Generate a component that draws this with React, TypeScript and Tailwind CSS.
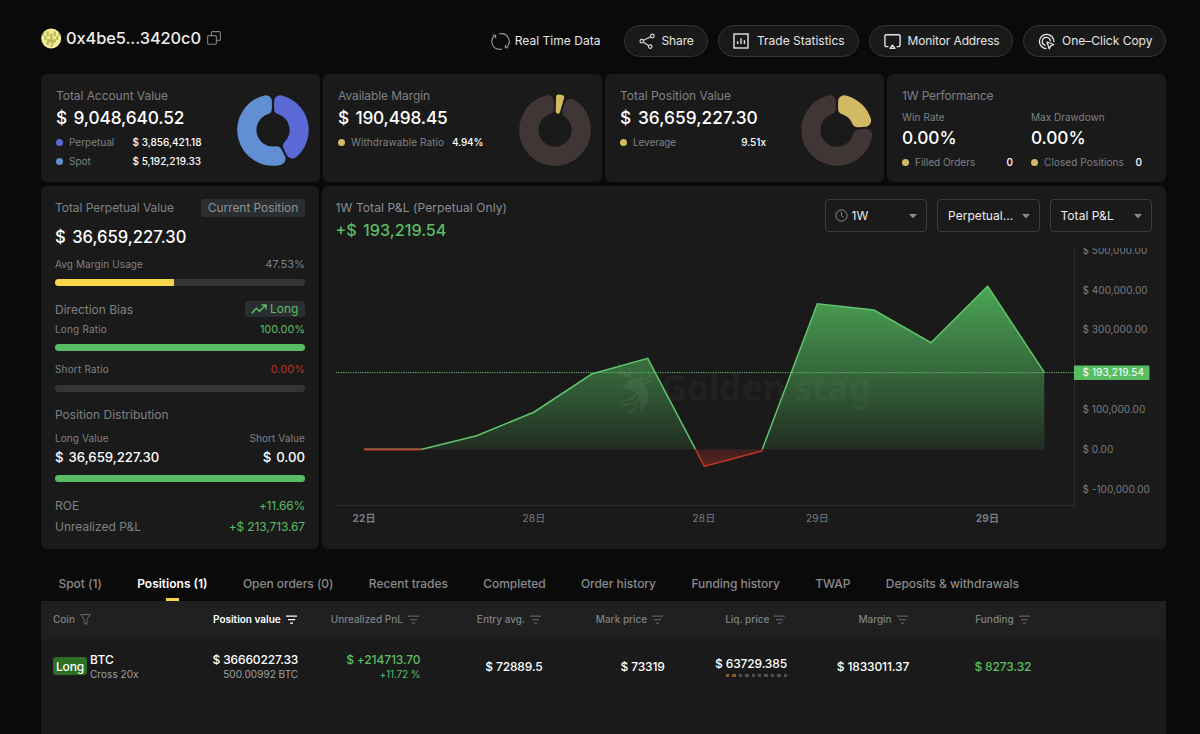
import type { ReactNode } from "react";
import clsx from "clsx";

interface SliceProps {
  cx: number;
  cy: number;
  from: number;
  to: number;
  round: number;
  color: string;
}

const OUTER = 35.7;
const INNER = 16.6;
const GAP = 1.1;

const polar = (cx: number, cy: number, r: number, a: number) =>
  `${(cx + r * Math.sin(a)).toFixed(2)} ${(cy - r * Math.cos(a)).toFixed(2)}`;

// Ring slice with rounded corners. The path is inset by the corner radius and
// grown back with a round stroke join.
const Slice = ({ cx, cy, from, to, round, color }: SliceProps) => {
  const a0 = (from * Math.PI) / 180;
  const a1 = (to * Math.PI) / 180;
  const ro = OUTER - round;
  const ri = INNER + round;
  const d = GAP + round;
  const o = Math.asin(d / ro);
  const i = Math.min(Math.asin(d / ri), (a1 - a0) / 2);
  const large = a1 - a0 - 2 * o > Math.PI ? 1 : 0;
  const largeIn = a1 - a0 - 2 * i > Math.PI ? 1 : 0;
  const path = [
    `M${polar(cx, cy, ro, a0 + o)}`,
    `A${ro} ${ro} 0 ${large} 1 ${polar(cx, cy, ro, a1 - o)}`,
    `L${polar(cx, cy, ri, a1 - i)}`,
    `A${ri} ${ri} 0 ${largeIn} 0 ${polar(cx, cy, ri, a0 + i)}Z`,
  ].join("");

  return <path d={path} fill={color} stroke={color} strokeWidth={round * 2} strokeLinejoin="round" />;
};

const Donut = ({ children }: { children: ReactNode }) => (
  <svg className="mt-[19px] mr-[10px] size-[74px] shrink-0" viewBox="0 0 74 74">
    {children}
  </svg>
);

const Dot = ({ className }: { className: string }) => (
  <span className={clsx("mr-[6px] size-[7px] shrink-0 rounded-full", className)} />
);

interface CardProps {
  title: string;
  value: string;
  titleClass?: string;
  valueClass: string;
  chart: ReactNode;
  children: ReactNode;
}

const Card = (props: CardProps) => (
  <div className="flex h-[108px] flex-1 justify-between rounded-[6px] bg-[#1a1a1a] pl-[15px]">
    <div className="pt-[14px]">
      <div className={clsx("text-xs leading-4 text-[#7e8185]", props.titleClass)}>{props.title}</div>
      <div className={clsx("mt-0.5 text-[17.3px] leading-6 font-medium text-white [word-spacing:2px]", props.valueClass)}>{props.value}</div>
      <div className="mt-1 flex flex-col gap-[3px] text-[10px] leading-4 text-[#7e8185]">{props.children}</div>
    </div>
    {props.chart}
  </div>
);

const Summary = () => (
  <div className="flex gap-[3px]">
    <Card
      title="Total Account Value"
      titleClass="tracking-[-0.06px]"
      value="$ 9,048,640.52"
      valueClass="tracking-[-0.12px]"
      chart={
        <Donut>
          <Slice cx={37} cy={37} from={0} to={153.4} round={6.2} color="#5b69d6" />
          <Slice cx={37} cy={37} from={153.4} to={360} round={6.2} color="#628fd3" />
        </Donut>
      }
    >
      <div className="flex items-center">
        <Dot className="bg-[#5b69d6]" />
        <span className="w-[63.5px]">Perpetual</span>
        <span className="font-medium text-white">$ 3,856,421.18</span>
      </div>
      <div className="flex items-center">
        <Dot className="bg-[#628fd3]" />
        <span className="w-[63.5px]">Spot</span>
        <span className="font-medium text-white">$ 5,192,219.33</span>
      </div>
    </Card>
    <Card
      title="Available Margin"
      titleClass="tracking-[-0.08px]"
      value="$ 190,498.45"
      valueClass="tracking-[-0.18px]"
      chart={
        <Donut>
          <Slice cx={37} cy={37} from={17.8} to={360} round={6.2} color="#403635" />
          <Slice cx={37} cy={37} from={0} to={17.8} round={2.2} color="#d3b964" />
        </Donut>
      }
    >
      <div className="flex items-center">
        <Dot className="bg-[#d3b964]" />
        <span className="w-[101px] tracking-[0.08px]">Withdrawable Ratio</span>
        <span className="font-medium tracking-[-0.12px] text-white">4.94%</span>
      </div>
    </Card>
    <Card
      title="Total Position Value"
      value="$ 36,659,227.30"
      valueClass="tracking-[0.07px]"
      chart={
        <Donut>
          <Slice cx={37} cy={37} from={0} to={85.6} round={6.2} color="#d3b964" />
          <Slice cx={37} cy={37} from={85.6} to={360} round={6.2} color="#403635" />
        </Donut>
      }
    >
      <div className="flex w-[146px] items-center">
        <Dot className="bg-[#d3b964]" />
        <span className="grow tracking-[-0.1px]">Leverage</span>
        <span className="font-medium text-white">9.51x</span>
      </div>
    </Card>
    <div className="h-[108px] flex-1 rounded-[6px] bg-[#1a1a1a] pt-[14px] pl-[15px] text-[#7e8185]">
      <div className="text-xs leading-4 tracking-[-0.15px]">1W Performance</div>
      <div className="mt-[5px] flex gap-[18px] text-[10px] leading-4">
        <div className="w-[111px]">
          <div className="tracking-[0.1px]">Win Rate</div>
          <div className="mt-px text-[17.3px] leading-6 font-medium tracking-[-0.1px] text-white">0.00%</div>
          <div className="mt-1 flex items-center">
            <Dot className="bg-[#d3b964]" />
            <span className="grow">Filled Orders</span>
            <span className="font-medium text-white">0</span>
          </div>
        </div>
        <div className="w-[111px]">
          <div>Max Drawdown</div>
          <div className="mt-px text-[17.3px] leading-6 font-medium tracking-[-0.1px] text-white">0.00%</div>
          <div className="mt-1 flex items-center">
            <Dot className="bg-[#d3b964]" />
            <span className="grow tracking-[0.08px]">Closed Positions</span>
            <span className="font-medium text-white">0</span>
          </div>
        </div>
      </div>
    </div>
  </div>
);

const Action = ({ icon, label, className }: { icon: ReactNode; label: string; className: string }) => (
  <button className={clsx("flex h-8 items-center rounded-full border border-[#343434] bg-[#191919] pl-[14px] text-xs whitespace-nowrap text-[#e6e6e6]", className)}>
    {icon}
    {label}
  </button>
);

const Header = () => (
  <header className="flex h-[74px] items-start justify-between">
    <div className="flex items-center pt-[26px]">
      <svg className="size-[21px]" viewBox="0 0 21 21">
        <clipPath id="avatar">
          <circle cx="10.2" cy="10.5" r="10" />
        </clipPath>
        <g clipPath="url(#avatar)">
          <rect width="21" height="21" fill="#f3ee95" />
          <path
            fill="#bdb75c"
            d="M0 4.5h3.2v3.6H0zM17.3 4.5H21v3.6h-3.7zM5.6 3.5h2.3v4.8H5.6zM12.6 3.5h2.3v4.8h-2.3zM3.2 8.3h2.4v3.4H3.2zM14.9 8.3h2.4v3.4h-2.4zM9.1 5.6h2.3v5.6H9.1zM5.6 11.2h9.3v3.3h-2.3v2.6h-2.3v-2.6H7.9v2.6H5.6zM9.1 17.3h2.3v1.8H9.1z"
          />
        </g>
      </svg>
      <span className="ml-[4px] text-[16.4px] leading-6 font-medium tracking-[-0.08px] text-[#ededed]">0x4be5...3420c0</span>
      <svg className="ml-[6px] size-[14px]" viewBox="0 0 14 14" fill="none" stroke="#808080" strokeWidth="1.1">
        <rect x="0.6" y="4.6" width="8.8" height="8.6" rx="1.2" />
        <path d="M4.4 4.6V1.8a1.2 1.2 0 0 1 1.2-1.2h6.6a1.2 1.2 0 0 1 1.2 1.2v6.4a1.2 1.2 0 0 1-1.2 1.2H9.4" />
      </svg>
    </div>
    <div className="flex items-center gap-[10px] pt-[25px]">
      <div className="mr-[13px] flex items-center gap-[5px] text-xs tracking-[0.03px] text-[#e6e6e6]">
        <svg className="size-[19px]" viewBox="0 0 19 19" fill="none" stroke="#9b9b9b" strokeWidth="1.1">
          <path d="M3.6 3.6A7.8 7.8 0 0 0 9.5 17.3h1.6M15.4 15.4A7.8 7.8 0 0 0 9.5 1.7H7.9" />
          <path d="M1.6 3.2h3v3M17.4 15.8h-3v-3" />
        </svg>
        Real Time Data
      </div>
      <Action
        className="w-[84.5px] gap-[7px] tracking-[-0.12px]"
        label="Share"
        icon={
          <svg className="size-4" viewBox="0 0 16 16" fill="none" stroke="#d8d8d8" strokeWidth="1.2">
            <circle cx="2.8" cy="8.2" r="1.8" />
            <circle cx="13.4" cy="3" r="1.8" />
            <circle cx="11.2" cy="13.6" r="1.8" />
            <path d="M4.5 7.3l7.2-3.5M4.4 9.2l5.1 3.4" />
          </svg>
        }
      />
      <Action
        className="w-[140.5px] gap-[8px]"
        label="Trade Statistics"
        icon={
          <svg className="size-4" viewBox="0 0 16 16" fill="none" stroke="#e6e6e6" strokeWidth="1.4">
            <rect x="1" y="1" width="14" height="14" />
            <path d="M4.6 8.2v2.8M8 5.2v5.8M11.4 7.2v3.8" />
          </svg>
        }
      />
      <Action
        className="w-[144.5px] gap-[7px] tracking-[-0.12px]"
        label="Monitor Address"
        icon={
          <svg className="size-[17px]" viewBox="0 0 17 17" fill="none" stroke="#e6e6e6" strokeWidth="1.4" strokeLinejoin="round">
            <path d="M4.4 13.6H2.4A1.5 1.5 0 0 1 .9 12.1V3.2a1.5 1.5 0 0 1 1.5-1.5h12.2a1.5 1.5 0 0 1 1.5 1.5v8.9a1.5 1.5 0 0 1-1.5 1.5h-2" />
            <path d="M8.5 12.2l2.4 3.2H6.1z" />
          </svg>
        }
      />
      <Action
        className="w-[143px] gap-[7px]"
        label="One–Click Copy"
        icon={
          <svg className="size-[17px]" viewBox="0 0 17 17" fill="none" stroke="#e6e6e6" strokeWidth="1.3" strokeLinejoin="round">
            <path d="M8.6 15.7a7.2 7.2 0 1 1 7.2-6.6" />
            <path d="M7.4 12.3a4 4 0 1 1 4.9-3.8" />
            <path d="M9 9l2.2 6.8 1.5-2.9 3-1.4z" />
          </svg>
        }
      />
    </div>
  </header>
);

const Bar = ({ value, color, className }: { value: number; color: string; className: string }) => (
  <div className={clsx("h-[7px] overflow-hidden rounded-full bg-[#353535]", className)}>
    <div className={clsx("h-full", color)} style={{ width: `${value}%` }} />
  </div>
);

const PerpetualPanel = () => (
  <section className="w-[278px] rounded-[6px] bg-[#1a1a1a] px-[14px] pt-[13px] text-xs leading-4 text-[#7e8185]">
    <div className="flex h-[18px] items-center justify-between">
      <span className="tracking-[-0.05px]">Total Perpetual Value</span>
      <span className="flex h-[18px] w-[104px] items-center justify-center rounded-[3px] bg-[#2b2e31] tracking-[-0.06px] text-[#8d9094]">Current Position</span>
    </div>
    <div className="mt-[8px] text-[16.6px] leading-6 font-medium text-white [word-spacing:2px]">$ 36,659,227.30</div>
    <div className="mt-[7px] flex justify-between">
      <span className="text-[10px] tracking-[0.1px]">Avg Margin Usage</span>
      <span className="text-[11px] tracking-[0.1px]">47.53%</span>
    </div>
    <Bar className="mt-[7px]" value={47.53} color="bg-[#f7d549]" />
    <div className="mt-[15px] flex h-4 items-center justify-between">
      <span className="pt-px">Direction Bias</span>
      <span className="flex h-4 w-[60px] items-center rounded-[3px] bg-[#2b2e31] pl-[6px] text-[#5abd65]">
        <svg className="mr-[3px] h-[10px] w-4" viewBox="0 0 16 10" fill="none" stroke="currentColor" strokeWidth="1.4">
          <path d="M.8 9.2l4.6-5 3.2 3 6-6.2M10.4 1h4.6v4.4" />
        </svg>
        Long
      </span>
    </div>
    <div className="mt-[4px] flex justify-between">
      <span className="text-[10px] tracking-[0.18px]">Long Ratio</span>
      <span className="text-[11px] tracking-[-0.08px] text-[#5abd65]">100.00%</span>
    </div>
    <Bar className="mt-[7px]" value={100} color="bg-[#5abd65]" />
    <div className="mt-[10px] flex justify-between">
      <span className="text-[10px] tracking-[0.18px]">Short Ratio</span>
      <span className="text-[11px] text-[#bb3329]">0.00%</span>
    </div>
    <Bar className="mt-[8px]" value={0} color="bg-[#bb3329]" />
    <div className="mt-[15px]">Position Distribution</div>
    <div className="mt-[7px] flex justify-between text-[10px] tracking-[0.1px]">
      <span>Long Value</span>
      <span>Short Value</span>
    </div>
    <div className="mt-px flex justify-between text-[13.2px] leading-5 font-medium text-white [word-spacing:1.5px]">
      <span>$ 36,659,227.30</span>
      <span>$ 0.00</span>
    </div>
    <Bar className="mt-[8px]" value={100} color="bg-[#5abd65]" />
    <div className="mt-4 flex justify-between">
      <span>ROE</span>
      <span className="tracking-[-0.2px] text-[#5abd65]">+11.66%</span>
    </div>
    <div className="mt-[5px] flex justify-between">
      <span>Unrealized P&amp;L</span>
      <span className="tracking-[-0.12px] text-[#5abd65]">+$ 213,713.67</span>
    </div>
  </section>
);

const Select = ({ icon, label }: { icon?: ReactNode; label: string }) => (
  <div className="flex h-[33px] w-[102.5px] items-center rounded-[4px] border border-[#3c3c3c] pr-[9px] pl-[10px] text-xs text-[#ececec]">
    {icon}
    <span className="grow tracking-[0.05px]">{label}</span>
    <svg className="h-1 w-2" viewBox="0 0 8 4">
      <path d="M0 0h8L4.6 3.7a1 1 0 0 1-1.2 0z" fill="#8c8c8c" />
    </svg>
  </div>
);

const axis = [
  { y: 250.5, label: "$ 500,000.00" },
  { y: 290, label: "$ 400,000.00" },
  { y: 329.5, label: "$ 300,000.00" },
  { y: 409.2, label: "$ 100,000.00" },
  { y: 449.5, label: "$ 0.00" },
  { y: 489, label: "$ -100,000.00" },
];

const days = [
  { x: 364, label: "22日", bold: true },
  { x: 534, label: "28日", bold: false },
  { x: 704, label: "28日", bold: false },
  { x: 817.5, label: "29日", bold: false },
  { x: 987.5, label: "29日", bold: true },
];

const Chart = () => (
  <svg className="h-[282px] w-[816px]" viewBox="336 248 816 282" fill="none">
    <defs>
      <linearGradient id="gain" gradientUnits="userSpaceOnUse" x1="0" y1="286" x2="0" y2="449">
        <stop offset="0" stopColor="#54bd60" stopOpacity="0.86" />
        <stop offset="1" stopColor="#54bd60" stopOpacity="0.12" />
      </linearGradient>
      <linearGradient id="loss" gradientUnits="userSpaceOnUse" x1="0" y1="449" x2="0" y2="466">
        <stop offset="0" stopColor="#bb3329" stopOpacity="0.2" />
        <stop offset="1" stopColor="#bb3329" stopOpacity="0.42" />
      </linearGradient>
    </defs>
    <path d="M422 449.3L476.7 435.7L534.3 412L591.7 374L647.7 358.3L695.5 449.3z" fill="url(#gain)" />
    <path d="M762.3 449.3L817.3 303.7L874 310L931 342.7L987.7 286.3L1044.3 372.3V449.3z" fill="url(#gain)" />
    <path d="M695.5 449.3L704.3 466.3L761.5 451L762.3 449.3z" fill="url(#loss)" />

    {/* watermark */}
    <g opacity="0.06" stroke="#fff" strokeWidth="2" strokeLinecap="round">
      <path d="M619 363c0 8 6 11 14 15M618 372c3 3 6 4 10 4M651 374c-4 6-8 5-13 6M651 381c-4 3-8 2-12 2M630 370v6M642 370l-2 8" />
      <path d="M624 386c4 0 6-7 12-7 5 0 6 4 9 9 4 7 4 14-4 21 2-8 0-13-5-18-4-3-8-1-12-5z" fill="#fff" />
      <path d="M639 398c-2 7-8 6-17 7M637 393c-2 6-8 6-16 9M637 406c-2 4-5 5-9 7" strokeWidth="1.6" />
    </g>
    <text x="661" y="401" textLength="210" fill="#fff" fillOpacity="0.05" className="font-['Noto_Sans'] text-[36px] font-bold">
      Golden stag
    </text>

    <path d="M364 449.6H422" stroke="#bb3329" strokeWidth="1.6" />
    <path d="M364 448.9H422" stroke="#a8774f" strokeWidth="0.9" />
    <path d="M422 449.3L476.7 435.7L534.3 412L591.7 374L647.7 358.3L695.5 449.3" stroke="#60c46c" strokeWidth="1.5" />
    <path d="M762.3 449.3L817.3 303.7L874 310L931 342.7L987.7 286.3L1044.3 372.3" stroke="#60c46c" strokeWidth="1.5" />
    <path d="M695.5 449.3L704.3 466.3L761.5 451L762.3 449.3" stroke="#bb3329" strokeWidth="1.6" />
    <path d="M336 372.6H1074" stroke="#68c473" strokeDasharray="1.2 1.2" />
    <path d="M336 505.5H1074.5V248" stroke="#2d2d30" />

    <g fill="#797b82" className="text-[10px]">
      {axis.map((tick) => (
        <text key={tick.y} x="1082.5" y={tick.y + 3.7} className="tracking-[0.05px]">
          {tick.label}
        </text>
      ))}
      {days.map((day) => (
        <text key={day.x} x={day.x} y="522" textAnchor="middle" fontWeight={day.bold ? 700 : 400} className="tracking-[0.2px]">
          {day.label}
        </text>
      ))}
    </g>
    <path d="M1074 365.5h74.5a1 1 0 0 1 1 1v12.5a1 1 0 0 1-1 1H1074z" fill="#57bd63" />
    <text x="1082.5" y="376.2" fill="#fff" className="text-[10px] tracking-[0.15px]">
      $ 193,219.54
    </text>
  </svg>
);

const PnlPanel = () => (
  <section className="h-full grow rounded-[6px] bg-[#1a1a1a] px-[14px]">
    <div className="flex h-[62px] justify-between pt-[13px]">
      <div className="-ml-[0.5px] pt-px">
        <div className="text-xs leading-4 tracking-[0.1px] text-[#8b8d90]">1W Total P&amp;L (Perpetual Only)</div>
        <div className="mt-[2px] text-[16.2px] leading-6 font-medium text-[#5abd65] [word-spacing:2px]">+$ 193,219.54</div>
      </div>
      <div className="flex gap-[10px]">
        <Select
          label="1W"
          icon={
            <svg className="mr-[4px] -ml-px size-[13px]" viewBox="0 0 13 13" fill="none" stroke="#8c8c8c">
              <circle cx="6.5" cy="6.5" r="5.6" />
              <path d="M6.5 3v3.8l2 1.6" />
            </svg>
          }
        />
        <Select label="Perpetual..." />
        <Select label="Total P&L" />
      </div>
    </div>
    <Chart />
  </section>
);

const tabs = [
  "Spot (1)",
  "Positions (1)",
  "Open orders (0)",
  "Recent trades",
  "Completed",
  "Order history",
  "Funding history",
  "TWAP",
  "Deposits & withdrawals",
];

const Tabs = () => (
  <nav className="flex h-[52px] gap-[35.4px] pt-[26px] pl-[17.5px] text-xs leading-[18px] font-medium tracking-[-0.04px] text-[#8a8a8a]">
    {tabs.map((tab) =>
      tab === "Positions (1)" ? (
        <div key={tab} className="flex flex-col items-center justify-between font-semibold tracking-normal text-white">
          {tab}
          <span className="h-[3px] w-[13px] bg-[#f7d549]" />
        </div>
      ) : (
        <div key={tab}>{tab}</div>
      ),
    )}
  </nav>
);

const columns = ["Position value", "Unrealized PnL", "Entry avg.", "Mark price", "Liq. price", "Margin", "Funding"];

const SortIcon = () => (
  <svg className="h-[9px] w-[11px]" viewBox="0 0 11 9" stroke="currentColor" strokeWidth="1.2">
    <path d="M0 1.1h11M2 4.6h7M4 8.1h3" />
  </svg>
);

const LiqMeter = () => (
  <div className="mt-[3px] flex justify-end gap-[3px]">
    {Array.from({ length: 10 }, (_, i) => (
      <span key={i} className={clsx("h-[3px] w-[3.4px]", i < 2 ? "bg-[#8a5a2c]" : "bg-[#505050]")} />
    ))}
  </div>
);

const grid = "grid grid-cols-[123px_repeat(7,122.2px)] pl-[12px] items-center";

const Positions = () => (
  <section className="h-[133px] bg-[#1a1a1a]">
    <div className={clsx(grid, "h-[38px] bg-[#202020] pb-px text-[10px] font-medium text-[#7d8085]")}>
      <div className="flex items-center gap-[5px]">
        Coin
        <svg className="h-[11px] w-[11px]" viewBox="0 0 11 11" fill="none" stroke="#6c6c6c">
          <path d="M.7.6h9.6L6.9 5.4v5L4.1 8.6V5.4z" strokeLinejoin="round" />
        </svg>
      </div>
      {columns.map((column, i) => (
        <div key={column} className={clsx("flex items-center justify-end gap-[5px] pr-[1.5px]", i === 0 && "font-semibold text-white")}>
          {column}
          <span className={i === 0 ? "text-white" : "text-[#5c5c5c]"}>
            <SortIcon />
          </span>
        </div>
      ))}
    </div>
    <div className={clsx(grid, "h-[54px] text-right text-xs leading-[15px] font-medium tracking-[-0.13px] text-white")}>
      <div className="flex items-center gap-[3px] text-left">
        <span className="flex h-[18px] w-[34px] items-center justify-center rounded-[3px] bg-[#2c6e22]">Long</span>
        <div className="pt-px">
          <div className="tracking-[0.2px]">BTC</div>
          <div className="text-[10px] font-normal tracking-[0.05px] text-[#a0a0a0]">Cross 20x</div>
        </div>
      </div>
      <div className="pt-px">
        <div>$ 36660227.33</div>
        <div className="text-[10px] font-normal tracking-[0.04px] text-[#a0a0a0]">500.00992 BTC</div>
      </div>
      <div className="pt-px text-[#5abd65]">
        <div>$ +214713.70</div>
        <div className="text-[10px] font-normal">+11.72 %</div>
      </div>
      <div>$ 72889.5</div>
      <div>$ 73319</div>
      <div>
        <div>$ 63729.385</div>
        <LiqMeter />
      </div>
      <div>$ 1833011.37</div>
      <div className="text-[#5abd65]">$ 8273.32</div>
    </div>
  </section>
);

export default function App() {
  return (
    <div className="h-[734px] w-[1200px] overflow-hidden bg-[#0a0a0a] pr-[34px] pl-[41px] font-['Inter','Noto_Sans_CJK_JP',sans-serif]">
      <Header />
      <Summary />
      <div className="mt-[4px] flex h-[363px] gap-[3px]">
        <PerpetualPanel />
        <PnlPanel />
      </div>
      <Tabs />
      <Positions />
    </div>
  );
}
